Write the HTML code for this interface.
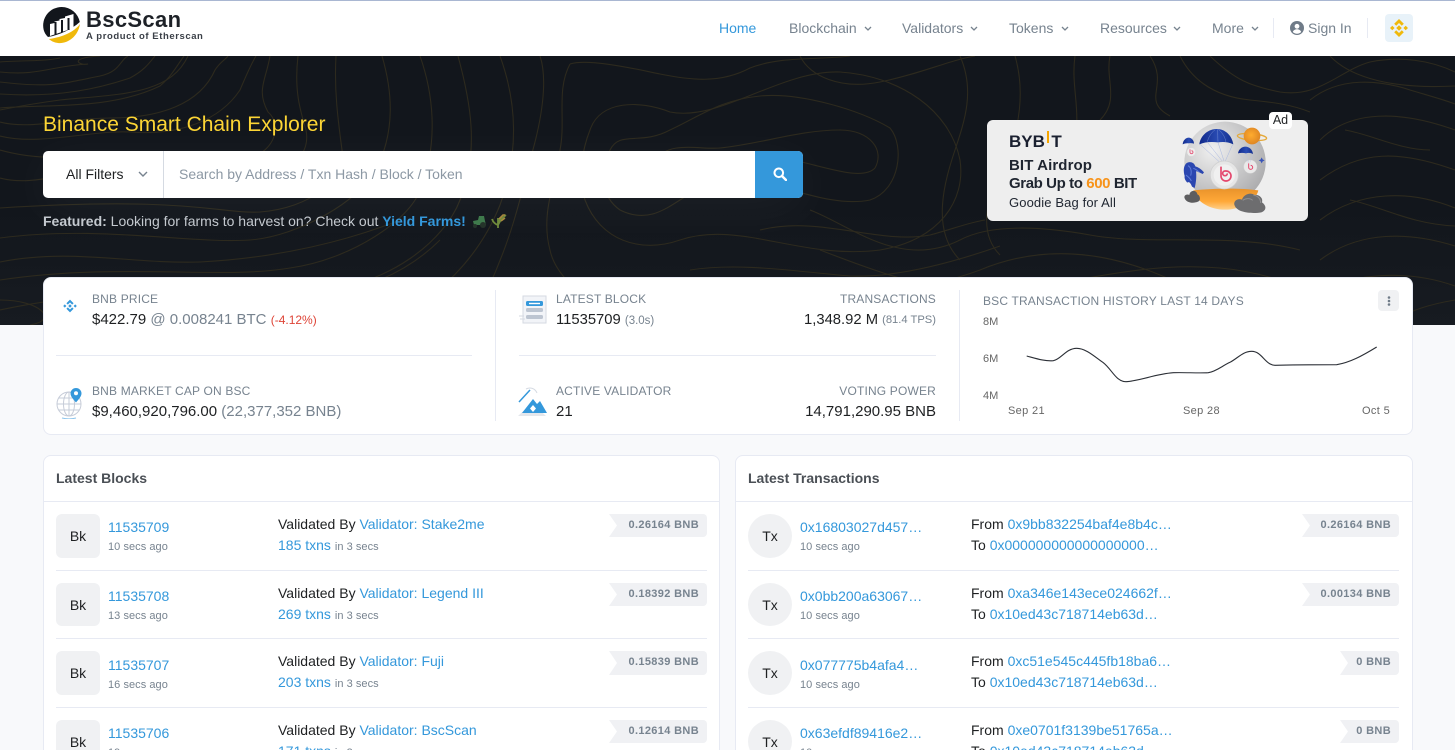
<!DOCTYPE html>
<html><head><meta charset="utf-8"><title>BscScan</title>
<style>
*{box-sizing:border-box}
html,body{margin:0;padding:0;width:1455px;height:750px;overflow:hidden;background:#f8f9fb;font-family:"Liberation Sans",sans-serif;font-size:14px;color:#1e2022}
#w{position:relative;width:1455px;height:750px;overflow:hidden}
.t{position:absolute;white-space:nowrap;line-height:20px}
.m{color:#77838f}.l{color:#3498db}
.h{font-size:12px;color:#77838f;line-height:16px;letter-spacing:.17px}
.s{font-size:11px;color:#77838f;letter-spacing:.05px}
.v{font-size:15px}
.box{position:absolute;background:#fff;border:1px solid #e7eaf3;border-radius:8px}
.hr{position:absolute;height:1px;background:#e7eaf3}
.ic{position:absolute;width:44px;height:44px;background:#f0f1f3;display:flex;align-items:center;justify-content:center;color:#1e2022}
.bd{position:absolute;height:23px;background:#f0f1f4;border-radius:0 4px 4px 0;clip-path:polygon(0 0,100% 0,100% 100%,0 100%,8px 50%);color:#77838f;font-weight:bold;font-size:11px;line-height:22px;text-align:right;padding-right:8px;letter-spacing:.35px}
.nav{font-size:14px;color:#77838f;top:18px}
.car{position:absolute;top:26px;width:8px;height:5px}
</style></head><body><div id="w">
<div style="position:absolute;left:0;top:0;width:1455px;height:56px;background:#fff;border-top:1px solid #a9b7d2"></div>
<svg style="position:absolute;left:40px;top:4px" width="44" height="44" viewBox="0 0 44 44">
<path d="M21.700 3A18.500 18.500 0 0 0 3.600 25.500C4.500 29 6 31 8 33C20 31 32 25 39.800 18A18.500 18.500 0 0 0 21.700 3Z" fill="#12161c"/>
<path d="M9 35c2 2 5 3.500 9 4 9 1 20-6 22-19-6 8-17 13-31 15z" fill="#f0b90b"/>
<path d="M10 20l4.500-1 0-1.500 5-1 0-1.500 5.500-1 0-1.500 8.500-2.500V24L10 32z" fill="#fff"/>
<path d="M14.500 18h2v12.500h-2zM21 16h2v12.500h-2zM27.500 14h2v12h-2z" fill="#12161c"/>
</svg>
<div class="t" style="left:86px;top:7px;font-size:22px;line-height:26px;font-weight:bold;color:#1d2127;letter-spacing:.35px">BscScan</div>
<div class="t" style="left:86px;top:30px;font-size:9.500px;line-height:14px;font-weight:bold;color:#3a3f47;letter-spacing:.58px">A product of Etherscan</div>

<div class="t nav" style="left:719px;color:#3498db">Home</div>
<div class="t nav" style="left:789px">Blockchain</div>
<div class="t nav" style="left:902px">Validators</div>
<div class="t nav" style="left:1009px">Tokens</div>
<div class="t nav" style="left:1100px">Resources</div>
<div class="t nav" style="left:1212px">More</div>
<svg class="car" style="left:864px" viewBox="0 0 8 5"><path d="M1 1l3 3 3-3" fill="none" stroke="#77838f" stroke-width="1.300"/></svg>
<svg class="car" style="left:970px" viewBox="0 0 8 5"><path d="M1 1l3 3 3-3" fill="none" stroke="#77838f" stroke-width="1.300"/></svg>
<svg class="car" style="left:1061px" viewBox="0 0 8 5"><path d="M1 1l3 3 3-3" fill="none" stroke="#77838f" stroke-width="1.300"/></svg>
<svg class="car" style="left:1173px" viewBox="0 0 8 5"><path d="M1 1l3 3 3-3" fill="none" stroke="#77838f" stroke-width="1.300"/></svg>
<svg class="car" style="left:1251px" viewBox="0 0 8 5"><path d="M1 1l3 3 3-3" fill="none" stroke="#77838f" stroke-width="1.300"/></svg>
<div style="position:absolute;left:1273px;top:18px;width:1px;height:20px;background:#e7eaf3"></div>
<svg style="position:absolute;left:1290px;top:21px" width="14" height="14" viewBox="0 0 14 14"><circle cx="7" cy="7" r="7" fill="#6f7b88"/><circle cx="7" cy="5.300" r="2.400" fill="#fff"/><path d="M2.800 11c.8-2 2.500-2.700 4.200-2.700s3.400.7 4.200 2.700a6 6 0 0 1-8.400 0z" fill="#fff"/></svg>
<div class="t nav" style="left:1308px">Sign In</div>
<div style="position:absolute;left:1367px;top:18px;width:1px;height:20px;background:#e7eaf3"></div>
<div style="position:absolute;left:1385px;top:14px;width:28px;height:28px;background:#e8f2f9;border-radius:4px"></div>
<svg style="position:absolute;left:1390px;top:19px" width="18" height="18" viewBox="0 0 18 18" fill="#f0b90b"><path d="M9 0l4.800 4.800-2 2L9 4 6.200 6.800l-2-2zM9 18l4.800-4.800-2-2L9 14l-2.800-2.800-2 2zM0 9l2.300-2.300L4.600 9l-2.300 2.300zM13.400 9l2.300-2.300L18 9l-2.300 2.300zM9 6.200L11.800 9 9 11.800 6.200 9z"/></svg>

<div style="position:absolute;left:0;top:56px;width:1455px;height:269px;background:linear-gradient(#12161c,#12161c 55%,#171b21);overflow:hidden">
<svg width="1455" height="269" viewBox="0 56 1455 269" fill="none" stroke="#2d2a1e" stroke-width="1.100">
<path d="M0 62C20 60 40 62 60 58M0 72C40 76 50 66 88 64 80 66 66 58 100 56M0 82C50 88 60 84 100 76 120 72 120 60 128 56M0 94C60 98 100 88 130 78 145 70 150 62 155 56M0 108C50 104 110 110 160 86 172 76 178 64 184 56"/>
<path d="M0 122C30 130 70 118 110 118 160 118 200 104 215 70 220 62 225 60 228 56M0 136C40 146 90 130 130 132 180 136 220 120 240 90 246 76 250 66 256 56"/>
<path d="M270 56C266 80 256 90 268 112 282 124 276 150 250 158 210 170 170 150 130 152 90 154 50 164 0 150"/>
<path d="M298 56C294 90 300 110 306 130 312 160 280 180 240 184 190 190 140 168 90 172 60 174 30 186 0 178"/>
<path d="M336 56C334 90 338 120 342 150 346 180 310 208 260 212 220 214 190 196 0 208"/>
<path d="M382 56C392 90 396 130 376 170 360 200 300 236 250 240 190 244 100 225 0 238"/>
<path d="M420 56C432 90 440 140 420 190 410 220 350 260 290 268 220 280 120 262 0 280"/>
<path d="M500 56C516 100 520 150 500 205 480 255 440 300 380 325M60 325C120 300 200 290 280 296 340 300 400 280 440 240"/>
<path d="M458 56C470 100 480 150 460 200 445 240 390 285 320 290 240 296 130 282 0 310"/>
<path d="M188 56C170 95 120 94 60 100 30 104 10 108 0 110"/>
<path d="M570 64C556 90 566 120 560 150 556 180 540 214 550 250 556 280 590 300 620 325"/>
<path d="M570 64C590 58 640 70 660 74 690 80 720 84 750 68 780 56 820 60 850 56"/>
<path d="M610 150C620 130 640 146 670 130 700 116 720 100 760 96 800 92 860 110 890 128 905 146 900 190 870 200 820 210 760 170 720 180 680 190 660 230 620 210 600 196 600 170 610 150z"/>
<path d="M655 160C670 140 700 150 720 148 760 144 800 130 840 130 870 130 885 150 875 168 860 184 810 160 770 156 730 152 690 190 665 182 650 176 648 170 655 160z"/>
<path d="M590 130C600 100 640 100 670 112 720 122 780 70 840 72 900 76 950 110 960 160 966 200 940 240 880 250 800 260 740 220 680 240 640 254 600 240 585 200 578 176 582 150 590 130z"/>
<path d="M540 325C560 290 640 275 720 285 800 295 900 300 980 270 1040 245 1100 250 1160 275 1220 300 1260 325 1300 325"/>
<path d="M640 325C700 305 780 315 860 320 940 325 1000 305 1080 290 1160 280 1240 290 1290 325"/>
<path d="M960 56C975 90 965 120 955 150 945 180 930 230 960 260M1015 56C1025 90 1020 130 1005 160 990 190 975 230 1000 255M1075 56C1070 90 1085 120 1070 150"/>
<path d="M1110 56C1105 80 1120 100 1100 120M1150 56C1170 86 1140 100 1170 116M1210 56C1235 80 1250 86 1280 92 1320 98 1340 70 1370 62 1400 56 1430 60 1455 72"/>
<path d="M1310 100C1340 76 1380 80 1410 90 1430 96 1445 100 1455 104M1320 140C1350 110 1400 110 1455 130M1320 180C1360 150 1400 150 1455 170M1320 220C1360 190 1410 190 1455 208M1320 260C1360 230 1410 232 1455 246M1300 300C1350 270 1410 270 1455 286"/>
<path d="M800 56C810 76 840 90 880 82 920 74 950 60 975 56M760 230C820 215 880 245 930 235 950 230 970 222 985 220"/>
<path d="M0 262C70 248 130 264 200 262 280 258 350 240 400 220M0 300C40 300 60 320 30 325M130 325C180 315 240 310 300 318"/>
<path d="M810 210C850 225 900 270 960 240 990 224 1040 226 1090 235 1150 246 1230 232 1300 250M820 250C860 265 920 290 980 292 1050 292 1130 260 1220 268 1290 274 1350 310 1400 325M1330 56C1345 72 1380 90 1455 86M540 56C548 80 542 120 530 160 520 200 510 250 470 325M860 325C900 300 960 300 1010 306M1455 300C1420 306 1400 315 1390 325M1345 130C1370 134 1400 150 1430 150M1350 200C1380 206 1410 224 1455 226"/>
<path d="M690 270C740 262 800 272 850 276 900 278 960 260 1000 246M600 300C660 286 730 296 800 304 860 310 920 306 960 296M1180 56C1190 76 1210 96 1250 100 1270 102 1290 104 1310 112"/>
</svg>
</div>

<div class="t" style="left:43px;top:112px;height:24px;font-size:21px;line-height:25px;color:#fcd535">Binance Smart Chain Explorer</div>
<div style="position:absolute;left:43px;top:151px;width:760px;height:47px;background:#fff;border-radius:5px;box-shadow:0 10px 50px rgba(255,255,255,.05)"></div>
<div class="t" style="left:66px;top:164px;color:#1e2022">All Filters</div>
<svg style="position:absolute;left:138px;top:171px" width="10" height="6" viewBox="0 0 10 6"><path d="M1 1l4 4 4-4" fill="none" stroke="#77838f" stroke-width="1.400"/></svg>
<div style="position:absolute;left:163px;top:151px;width:1px;height:47px;background:#d5dae2"></div>
<div class="t" style="left:179px;top:164px;color:#8c98a4">Search by Address / Txn Hash / Block / Token</div>
<div style="position:absolute;left:755px;top:151px;width:48px;height:47px;background:#3498db;border-radius:0 5px 5px 0"></div>
<svg style="position:absolute;left:773px;top:167px" width="14" height="14" viewBox="0 0 14 14"><circle cx="5.800" cy="5.800" r="4.300" fill="none" stroke="#fff" stroke-width="2"/><path d="M9 9l4 4" stroke="#fff" stroke-width="2.400" stroke-linecap="round"/></svg>
<div class="t" style="left:43px;top:211px;color:#c4c9cf"><b>Featured:</b> Looking for farms to harvest on? Check out <b style="color:#3498db">Yield Farms!</b></div>
<svg style="position:absolute;left:471px;top:213px" width="36" height="16" viewBox="0 0 36 16"><path d="M2 8l5-1 1-4h5l1 5 1 4H3z" fill="#3f7a4c"/><circle cx="4" cy="13" r="2" fill="#25342a"/><circle cx="12" cy="12" r="3" fill="#25342a"/><path d="M27 15V5M27 12c-3-1-5-3-6-6M27 12c2-4 5-8 8-10M27 9c2-2 3-4 6-5" fill="none" stroke="#6f8a3c" stroke-width="1.800"/><path d="M28 6l4-4 2 0M30 8l4-3" stroke="#a8893f" stroke-width="1.600" fill="none"/></svg>

<div style="position:absolute;left:987px;top:120px;width:321px;height:101px;background:#eeeeee;border-radius:6px"></div>
<div class="t" style="left:1009px;top:132px;font-size:17px;line-height:20px;font-weight:bold;color:#1a2030">BYB<span style="display:inline-block;width:2.500px;height:12px;background:#f7a600;margin:0 2px 0 2px;position:relative;top:-4px"></span>T</div>
<div class="t" style="left:1009px;top:156px;font-size:15px;font-weight:bold;color:#1f2530;letter-spacing:.1px">BIT Airdrop</div>
<div class="t" style="left:1009px;top:174px;font-size:15px;font-weight:bold;color:#1f2530;letter-spacing:-.4px">Grab Up to <span style="color:#f7931a">600</span> BIT</div>
<div class="t" style="left:1009px;top:193px;font-size:13px;color:#1f2530;letter-spacing:.12px">Goodie Bag for All</div>
<svg style="position:absolute;left:1170px;top:115px" width="120" height="105" viewBox="0 0 360 315">
<defs>
<radialGradient id="sp" cx=".35" cy=".35" r=".8"><stop offset="0" stop-color="#f0f0f0"/><stop offset="1" stop-color="#a4a4a6"/></radialGradient>
<linearGradient id="bw" x1="0" y1="0" x2="0" y2="1"><stop offset="0" stop-color="#e9932b"/><stop offset=".6" stop-color="#ffa838"/><stop offset="1" stop-color="#ffd08a"/></linearGradient>
<radialGradient id="pl" cx=".45" cy=".45" r=".6"><stop offset="0" stop-color="#ffac2f"/><stop offset="1" stop-color="#dc8423"/></radialGradient>
<linearGradient id="ch" x1="0" y1="0" x2="1" y2="0"><stop offset="0" stop-color="#10298a"/><stop offset=".55" stop-color="#2a4cb4"/><stop offset="1" stop-color="#14308f"/></linearGradient>
</defs>
<circle cx="165" cy="142" r="122" fill="url(#sp)"/>
<path d="M70 226c60-6 140-8 195 0-8 34-56 58-100 58-46 0-86-24-95-58z" fill="url(#bw)"/>
<path d="M88 88C92 58 118 42 140 42c26 0 46 20 50 46-16-8-32-8-46-6-18-2-38-2-56 6z" fill="url(#ch)"/>
<path d="M112 80c4-14 12-28 24-36M144 80c-1-12 0-26-2-36M168 82c-2-14-10-28-22-38" stroke="#6d87cf" stroke-width="1.500" fill="none"/>
<path d="M90 88l62 56M114 84l44 56M144 82l18 56M188 88l-22 50" stroke="#a9b8e0" stroke-width="1.500" fill="none"/>
<circle cx="163" cy="180" r="42" fill="#e6e6e6" stroke="#cfcfcf" stroke-width="2"/><circle cx="163" cy="180" r="32" fill="#f0f0f0"/>
<path d="M153 155v28a15 15 0 1 0 15-15h-3a7 7 0 1 0 7 7" fill="none" stroke="#e4476d" stroke-width="5"/>
<path d="M204 115c2-12 12-20 22-20 12 0 22 10 23 22-8-4-14-4-21-2-8-2-16-2-24 0z" fill="url(#ch)"/>
<circle cx="241" cy="155" r="20" fill="#e9e9e9" stroke="#d2d2d2"/><path d="M236 145v12a6 6 0 1 0 6-6" fill="none" stroke="#e4476d" stroke-width="3"/>
<path d="M207 117l28 26M228 116l8 26M248 118l-8 24" stroke="#b7c3e4" stroke-width="1"/>
<path d="M38 88c1-12 10-20 18-20s16 8 16 18c-6-2-12-2-16-1-6-1-12 0-18 3z" fill="url(#ch)"/>
<circle cx="64" cy="111" r="13" fill="#ededed" stroke="#d5d5d5"/><path d="M60 103v8a4.500 4.500 0 1 0 4.500-4" fill="none" stroke="#e4476d" stroke-width="2.500"/>
<path d="M48 146c8-8 24-6 28 8 8 2 18 8 26 18l-4 5c-8-4-14-8-20-8 2 16 0 34-4 50l-8-4c-4-12-10-16-14-12-4-4-10-12-8-20-4-14-4-28 4-37z" fill="#2a46b0"/>
<path d="M54 152c8 4 12 16 8 30M48 180c6 6 12 8 16 18M70 160c6 2 12 6 18 12" stroke="#5d7bd8" stroke-width="3" fill="none"/>
<ellipse cx="246" cy="66" rx="44" ry="10" fill="none" stroke="#e4a93a" stroke-width="4" transform="rotate(5 246 66)"/>
<circle cx="246" cy="63" r="25" fill="url(#pl)"/>
<path d="M272 133l3-6 3 6 6 3-6 3-3 6-3-6-6-3z" fill="#3a55b8"/>
<path d="M44 250c-4-10 8-14 14-10 2-16 22-16 24-2 8 2 12 18 2 22-14 6-34 4-40-10z" fill="#5d5d5f"/>
<path d="M194 272c-6-14 10-24 22-18 4-14 24-24 38-14 14-2 26 10 22 22 14 10 14 24-2 30-20 4-70 4-80-20z" fill="#6d6d6f"/>
<path d="M218 256c8-6 22-8 30 0M250 240c12 2 22 10 22 24" stroke="#8f8f91" stroke-width="3" fill="none"/>
</svg>
<div class="t" style="left:1269px;top:112px;width:23px;height:17px;background:#fff;border-radius:4px;text-align:center;font-size:12.500px;line-height:17px;color:#1e2022">Ad</div>

<div class="box" style="left:43px;top:277px;width:1370px;height:158px"></div>
<div style="position:absolute;left:495px;top:290px;width:1px;height:131px;background:#e7eaf3"></div>
<div style="position:absolute;left:959px;top:290px;width:1px;height:131px;background:#e7eaf3"></div>
<div class="hr" style="left:56px;top:355px;width:416px"></div>
<div class="hr" style="left:519px;top:355px;width:417px"></div>

<svg style="position:absolute;left:62px;top:298px" width="16" height="16" viewBox="0 0 20 20" fill="#3498db"><path d="M10 2l4.500 4.500-1.800 1.800L10 5.600 7.300 8.300 5.500 6.500zM10 18l4.500-4.500-1.800-1.800-2.700 2.700-2.700-2.700-1.800 1.800zM1.500 10l2-2 2 2-2 2zM14.500 10l2-2 2 2-2 2zM10 7.800l2.200 2.200-2.200 2.200L7.800 10z"/></svg>
<div class="t h" style="left:92px;top:291px">BNB PRICE</div>
<div class="t v" style="left:92px;top:310px">$422.79 <span class="m">@ 0.008241 BTC</span> <span style="color:#de4437;font-size:12px">(-4.12%)</span></div>
<svg style="position:absolute;left:56px;top:387px" width="28" height="32" viewBox="0 0 28 32"><g fill="none" stroke="#c6ccd8" stroke-width="1"><circle cx="13" cy="17" r="12"/><ellipse cx="13" cy="17" rx="5.500" ry="12"/><path d="M1 17h24M3 11h20M3 23h20M13 5v24"/></g><path d="M6 31c4 1 10 1 14 0" stroke="#8cc4ec" fill="none"/><path d="M20 1a5.500 5.500 0 0 1 5.500 5.500c0 3-3 6-5.500 9-2.500-3-5.500-6-5.500-9A5.500 5.500 0 0 1 20 1z" fill="#3498db"/><circle cx="20" cy="6.300" r="2" fill="#fff"/></svg>
<div class="t h" style="left:92px;top:383px">BNB MARKET CAP ON BSC</div>
<div class="t v" style="left:92px;top:402px">$9,460,920,796.00 <span class="m">(22,377,352 BNB)</span></div>

<svg style="position:absolute;left:519px;top:295px" width="30" height="30" viewBox="0 0 30 30"><rect x="4" y="1" width="23" height="27" fill="#f2f4f8" stroke="#d5dae2"/><rect x="7" y="6" width="17" height="5" rx="1.500" fill="#3498db"/><rect x="10" y="7.800" width="11" height="1.400" fill="#fff"/><rect x="7" y="13" width="17" height="4" rx="1.500" fill="#bdc5d1"/><rect x="7" y="20" width="17" height="4" rx="1.500" fill="#bdc5d1"/><path d="M0 21h5M1 24h5" stroke="#d5dae2"/></svg>
<div class="t h" style="left:556px;top:291px">LATEST BLOCK</div>
<div class="t" style="left:556px;top:310px;font-size:14.800px">11535709 <span class="m" style="font-size:11.500px">(3.0s)</span></div>
<div class="t h" style="right:519px;top:291px">TRANSACTIONS</div>
<div class="t" style="left:804px;top:310px;font-size:14.800px">1,348.92 M</div>
<div class="t m" style="right:519px;top:310px;font-size:11.200px">(81.4 TPS)</div>
<svg style="position:absolute;left:518px;top:386px" width="30" height="30" viewBox="0 0 30 30"><path d="M0 30l14-13 14 13z" fill="#e4e7ec"/><path d="M4 27l11-14 4 5 3-3 7 12z" fill="#3498db"/><path d="M15 19l3 3.500-3 3.500-3-3.500z" fill="#fff"/><path d="M1 16L12 4" stroke="#3498db" stroke-width="1.500"/><path d="M8 3c4-2 9-1 11 4" fill="none" stroke="#d5dae2"/></svg>
<div class="t h" style="left:556px;top:383px">ACTIVE VALIDATOR</div>
<div class="t" style="left:556px;top:402px;font-size:15px">21</div>
<div class="t h" style="right:519px;top:383px">VOTING POWER</div>
<div class="t v" style="right:519px;top:402px">14,791,290.95 BNB</div>

<div class="t h" style="left:983px;top:293px;letter-spacing:.17px">BSC TRANSACTION HISTORY LAST 14 DAYS</div>
<div style="position:absolute;left:1378px;top:290px;width:21px;height:21px;background:#f0f1f3;border-radius:4px"></div>
<svg style="position:absolute;left:1387px;top:296px" width="4" height="10" viewBox="0 0 4 10" fill="#6f7b88"><circle cx="2" cy="1.500" r="1.300"/><circle cx="2" cy="5" r="1.300"/><circle cx="2" cy="8.500" r="1.300"/></svg>
<div class="t" style="left:983px;top:312px;font-size:11px;color:#666">8M</div>
<div class="t" style="left:983px;top:349px;font-size:11px;color:#666">6M</div>
<div class="t" style="left:983px;top:386px;font-size:11px;color:#666">4M</div>
<div class="t" style="left:1008px;top:401px;font-size:11px;color:#666;letter-spacing:.35px">Sep 21</div>
<div class="t" style="left:1183px;top:401px;font-size:11px;color:#666;letter-spacing:.35px">Sep 28</div>
<div class="t" style="left:1362px;top:401px;font-size:11px;color:#666;letter-spacing:.35px">Oct 5</div>
<svg style="position:absolute;left:1020px;top:340px" width="362" height="48" viewBox="1020 340 362 48"><path d="M1026.700 356C1036 358.500 1045 361.500 1053.300 360.700 1061 359.500 1066 348.300 1076.700 348.300 1086 348.300 1095 357 1103.300 362.700 1112 369.500 1116 381.700 1126 381.700 1140 381 1155 374 1173.300 372.700 1185 372.300 1198 373.300 1208.300 372.700 1216 371.500 1222 366 1230 362.300 1238 358 1243 351.300 1251.700 351.300 1262 351.300 1265 365 1275 365.300 1295 364.700 1320 364.700 1336.700 364.700 1350 362.500 1362 356 1376.700 347" fill="none" stroke="#2b2f36" stroke-width="1.100"/></svg>

<div class="box" style="left:43px;top:455px;width:677px;height:320px"></div>
<div class="box" style="left:735px;top:455px;width:678px;height:320px"></div>
<div class="hr" style="left:44px;top:501px;width:675px"></div>
<div class="hr" style="left:736px;top:501px;width:676px"></div>
<div class="t" style="left:56px;top:468px;font-weight:bold;color:#4a4f55">Latest Blocks</div>
<div class="t" style="left:748px;top:468px;font-weight:bold;color:#4a4f55">Latest Transactions</div>

<div class="hr" style="left:56px;top:570px;width:651px"></div>
<div class="hr" style="left:56px;top:638px;width:651px"></div>
<div class="hr" style="left:56px;top:707px;width:651px"></div>
<div class="hr" style="left:748px;top:570px;width:651px"></div>
<div class="hr" style="left:748px;top:638px;width:651px"></div>
<div class="hr" style="left:748px;top:707px;width:651px"></div>

<div class="ic" style="left:56px;top:514px;border-radius:6px">Bk</div>
<div class="t l" style="left:108px;top:517px">11535709</div>
<div class="t s" style="left:108px;top:537px">10 secs ago</div>
<div class="t" style="left:278px;top:514px">Validated By <span class="l">Validator: Stake2me</span></div>
<div class="t" style="left:278px;top:535px"><span class="l">185 txns</span> <span class="s">in 3 secs</span></div>
<div class="bd" style="left:609px;top:514px;width:98px">0.26164 BNB</div>

<div class="ic" style="left:56px;top:583px;height:43px;border-radius:6px">Bk</div>
<div class="t l" style="left:108px;top:586px">11535708</div>
<div class="t s" style="left:108px;top:606px">13 secs ago</div>
<div class="t" style="left:278px;top:583px">Validated By <span class="l">Validator: Legend III</span></div>
<div class="t" style="left:278px;top:604px"><span class="l">269 txns</span> <span class="s">in 3 secs</span></div>
<div class="bd" style="left:609px;top:583px;width:98px">0.18392 BNB</div>

<div class="ic" style="left:56px;top:651px;border-radius:6px">Bk</div>
<div class="t l" style="left:108px;top:655px">11535707</div>
<div class="t s" style="left:108px;top:675px">16 secs ago</div>
<div class="t" style="left:278px;top:651px">Validated By <span class="l">Validator: Fuji</span></div>
<div class="t" style="left:278px;top:672px"><span class="l">203 txns</span> <span class="s">in 3 secs</span></div>
<div class="bd" style="left:609px;top:651px;width:98px;height:24px">0.15839 BNB</div>

<div class="ic" style="left:56px;top:720px;height:43px;border-radius:6px">Bk</div>
<div class="t l" style="left:108px;top:723px">11535706</div>
<div class="t s" style="left:108px;top:743px">19 secs ago</div>
<div class="t" style="left:278px;top:720px">Validated By <span class="l">Validator: BscScan</span></div>
<div class="t" style="left:278px;top:741px"><span class="l">171 txns</span> <span class="s">in 3 secs</span></div>
<div class="bd" style="left:609px;top:720px;width:98px">0.12614 BNB</div>

<div class="ic" style="left:748px;top:514px;border-radius:50%">Tx</div>
<div class="t l" style="left:800px;top:517px">0x16803027d457…</div>
<div class="t s" style="left:800px;top:537px">10 secs ago</div>
<div class="t" style="left:971px;top:514px">From <span class="l">0x9bb832254baf4e8b4c…</span></div>
<div class="t" style="left:971px;top:535px">To <span class="l">0x000000000000000000…</span></div>
<div class="bd" style="left:1302px;top:514px;width:97px">0.26164 BNB</div>

<div class="ic" style="left:748px;top:583px;height:43px;border-radius:50%">Tx</div>
<div class="t l" style="left:800px;top:586px">0x0bb200a63067…</div>
<div class="t s" style="left:800px;top:606px">10 secs ago</div>
<div class="t" style="left:971px;top:583px">From <span class="l">0xa346e143ece024662f…</span></div>
<div class="t" style="left:971px;top:604px">To <span class="l">0x10ed43c718714eb63d…</span></div>
<div class="bd" style="left:1302px;top:583px;width:97px">0.00134 BNB</div>

<div class="ic" style="left:748px;top:651px;border-radius:50%">Tx</div>
<div class="t l" style="left:800px;top:655px">0x077775b4afa4…</div>
<div class="t s" style="left:800px;top:675px">10 secs ago</div>
<div class="t" style="left:971px;top:651px">From <span class="l">0xc51e545c445fb18ba6…</span></div>
<div class="t" style="left:971px;top:672px">To <span class="l">0x10ed43c718714eb63d…</span></div>
<div class="bd" style="left:1340px;top:651px;width:59px;height:24px">0 BNB</div>

<div class="ic" style="left:748px;top:720px;height:43px;border-radius:50%">Tx</div>
<div class="t l" style="left:800px;top:723px">0x63efdf89416e2…</div>
<div class="t s" style="left:800px;top:743px">10 secs ago</div>
<div class="t" style="left:971px;top:720px">From <span class="l">0xe0701f3139be51765a…</span></div>
<div class="t" style="left:971px;top:741px">To <span class="l">0x10ed43c718714eb63d…</span></div>
<div class="bd" style="left:1340px;top:720px;width:59px">0 BNB</div>
</div></body></html>
